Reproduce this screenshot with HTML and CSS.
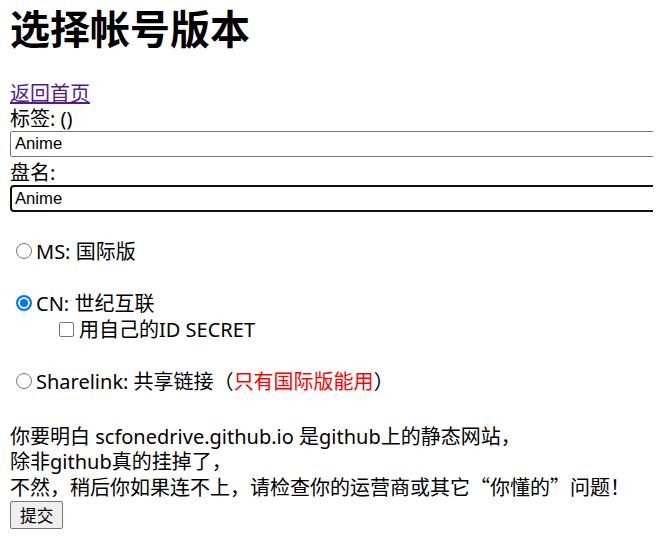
FILE: index.html
```html
<!DOCTYPE html>
<html lang="zh-CN">
<head>
<meta charset="utf-8">
<title>选择帐号版本</title>
<link rel="stylesheet" href="styles.css">
</head>
<body>
<h1 class="title">选择帐号版本</h1>
<div class="line"><a class="home" href="#">返回首页</a></div>
<div class="line">标签: ()</div>
<input class="field" type="text" value="Anime">
<div class="line label-gap">盘名:</div>
<input class="field field-focus" type="text" value="Anime">

<div class="options">
  <label class="opt"><span class="radio"></span>MS: 国际版</label>
  <label class="opt opt-gap"><span class="radio radio-on"></span>CN: 世纪互联</label>
  <label class="sub"><span class="check"></span>用自己的ID SECRET</label>
  <label class="opt opt-gap"><span class="radio"></span>Sharelink: 共享链接（<span class="warn">只有国际版能用</span>）</label>
</div>

<p class="notice">你要明白 scfonedrive.github.io 是github上的静态网站，<br>除非github真的挂掉了，<br>不然，稍后你如果连不上，请检查你的运营商或其它<span class="cjk">“</span>你懂的<span class="cjk">”</span>问题！</p>
<button class="submit" type="button">提交</button>
</body>
</html>
```
FILE: styles.css
```css
html {
  overflow: hidden;
}
body {
  margin: 2px 10px 10px;
  font-family: "Noto Sans", "Noto Sans CJK SC", sans-serif;
  font-size: 20px;
  line-height: 25px;
  color: #000;
  background: #fff;
}
.title {
  margin: 0 0 26px;
  font-size: 40px;
  line-height: 53px;
  font-weight: bold;
}
.line {
  height: 25px;
  line-height: 25px;
}
.home {
  color: #551a8b;
  text-decoration: underline;
}
.label-gap {
  margin-top: 3px;
}
.field {
  display: block;
  box-sizing: border-box;
  width: 110%;
  height: 26px;
  margin: 0;
  padding: 0 4px;
  border: 1px solid #767676;
  border-radius: 2px;
  font-family: "Liberation Sans", Arial, sans-serif;
  font-size: 16.67px;
  color: #000;
  background: #fff;
}
.field-focus {
  height: 27px;
  border: 2px solid #101010;
  border-radius: 4px;
  padding: 0 3px;
  outline: none;
}
.options {
  margin-top: 26px;
}
.opt, .sub {
  display: flex;
  align-items: center;
  height: 26px;
  white-space: nowrap;
}
.opt-gap {
  margin-top: 26px;
}
.sub {
  padding-left: 49px;
}
.radio {
  box-sizing: border-box;
  width: 16px;
  height: 16px;
  margin: 0 4px 0 6px;
  border: 1px solid #767676;
  border-radius: 50%;
  background: #fff;
  flex: none;
}
.radio-on {
  border: 2px solid #0075ff;
  background: #0075ff;
  box-shadow: inset 0 0 0 2px #fff;
}
.check {
  box-sizing: border-box;
  width: 15px;
  height: 15px;
  margin: 0 5px 0 0;
  border: 1px solid #767676;
  border-radius: 2px;
  background: #fff;
  flex: none;
}
.warn {
  color: #ff0000;
}
.cjk {
  font-family: "Noto Sans CJK SC", sans-serif;
}
.notice {
  margin: 30px 0 0;
  line-height: 25px;
  white-space: nowrap;
}
.submit {
  display: block;
  height: 28px;
  margin: 1px 0 0;
  padding: 0 9px;
  border: 1px solid #767676;
  border-radius: 2px;
  background: #efefef;
  font-family: "Noto Sans CJK SC", sans-serif;
  font-size: 16.67px;
  line-height: 26px;
  color: #000;
}
```
